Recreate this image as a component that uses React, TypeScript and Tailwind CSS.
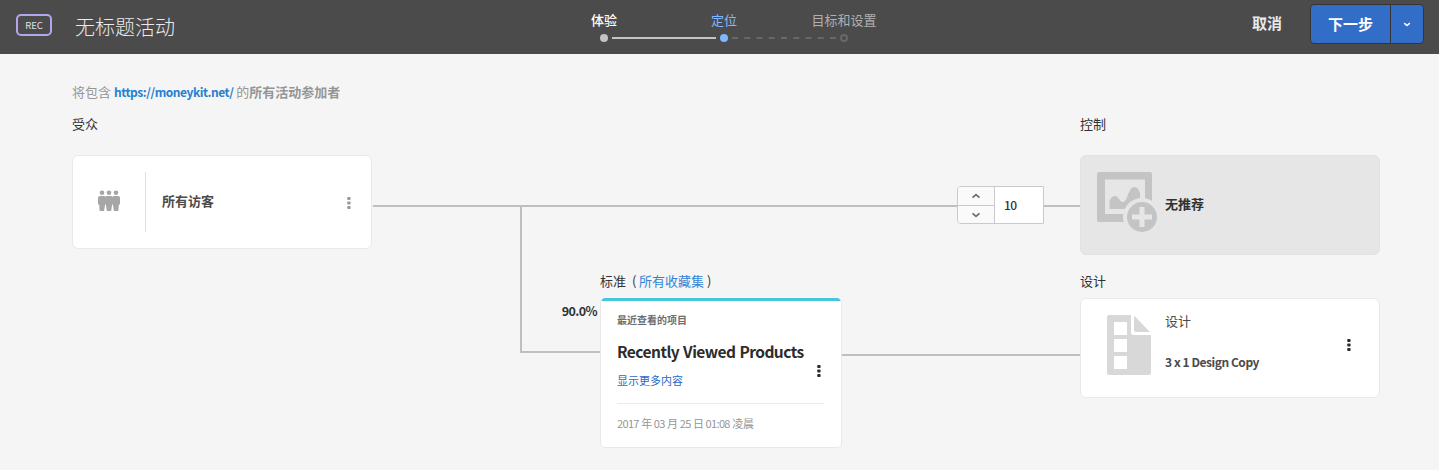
import React from "react";

function Dots({ className = "" }: { className?: string }) {
  return (
    <svg width="4" height="12" viewBox="0 0 4 12" fill="currentColor" className={className}>
      <rect x="0.2" y="0" width="3.4" height="3" rx="1" />
      <rect x="0.2" y="4.5" width="3.4" height="3" rx="1" />
      <rect x="0.2" y="9" width="3.4" height="3" rx="1" />
    </svg>
  );
}

function Chevron({ up = false, className = "" }: { up?: boolean; className?: string }) {
  return (
    <svg width="10" height="6" viewBox="0 0 10 6" fill="none" stroke="currentColor" strokeWidth="1.8" className={className}>
      <path d={up ? "M1.5 4.7 5 1.6 8.5 4.7" : "M1.5 1.3 5 4.4 8.5 1.3"} />
    </svg>
  );
}

function PeopleIcon() {
  return (
    <svg width="24" height="22" viewBox="0 0 24 22" fill="#a6a6a6">
      <circle cx="5" cy="2.7" r="2.3" />
      <circle cx="12" cy="2.7" r="2.3" />
      <circle cx="19" cy="2.7" r="2.3" />
      <path d="M2.700 6h4.600L8.500 6.800 9.700 6h4.600L15.500 6.800 16.700 6h4.600Q23 6 23 8v6.500h-1.200L21.400 21h-4.500L15.900 14.500h-.8L14.200 21H9.800L8.900 14.500h-.8L7.100 21H2.600L2.200 14.500H1V8q0-2 1.700-2Z" />
    </svg>
  );
}

function ImageAddIcon() {
  return (
    <svg width="62" height="62" viewBox="0 0 62 62" fill="#c4c4c4">
      <path fillRule="evenodd" d="M2 0h51q2 0 2 2v48H2q-2 0-2-2V2Q0 0 2 0Zm6 7.500v34.500h40V7.500Z" />
      <path d="M12.500 37v-7.500c1-3.500 3-5.500 5.500-5.500 3.500 0 4.500 6 8 6 4.500 0 5.500-15 11-15 3.500 0 5 3 6 6v16Z" />
      <circle cx="45" cy="45" r="19" fill="#e6e6e6" />
      <circle cx="45" cy="45" r="15" />
      <path d="M45 35v20M35 45h20" stroke="#e6e6e6" strokeWidth="5" />
    </svg>
  );
}

function DesignIcon() {
  return (
    <svg width="44" height="60" viewBox="0 0 44 60">
      <path fill="#d8d8d8" d="M2 0h22v18q0 2 2 2h18v38q0 2-2 2H2q-2 0-2-2V2q0-2 2-2Z" />
      <path fill="#d8d8d8" d="M27 .5V15q0 2 2 2h14Z" />
      <path fill="#fff" d="M7 7h13v13H7zM7 24h13v13H7zM7 41h13v13H7z" />
    </svg>
  );
}

function Steps() {
  return (
    <div className="w-[360px] pt-[10px] text-[13px] leading-5">
      <div className="grid grid-cols-3 text-center">
        <span className="font-medium text-white">体验</span>
        <span className="text-[#82b8ff]">定位</span>
        <span className="text-[#b0b0b0]">目标和设置</span>
      </div>
      <div className="flex items-center pt-[4px] pl-14">
        <span className="size-2 rounded-full bg-[#c4c4c4]" />
        <span className="mx-1 h-[2px] w-[104px] bg-[#c4c4c4]" />
        <span className="size-2 rounded-full bg-[#80b7fa]" />
        <svg className="mx-1" width="104" height="2">
          <path d="M0 1h104" stroke="#686868" strokeWidth="2" strokeDasharray="6 6.250" />
        </svg>
        <span className="size-2 rounded-full border-2 border-[#686868]" />
      </div>
    </div>
  );
}

function Header() {
  return (
    <header className="flex h-[54px] bg-[#4b4b4b] text-white">
      <div className="flex w-[544px] items-center pl-4">
        <span className="-mt-1 flex h-[22px] w-9 items-center justify-center rounded-[5px] border-2 border-[#b5a5ec] text-[9.500px] text-[#e0e0e0]">REC</span>
        <h1 className="ml-[23px] text-[20px] font-light text-[#eaeaea]">无标题活动</h1>
      </div>
      <Steps />
      <div className="ml-auto flex items-start pt-1 pr-[15px] text-[15px] font-bold">
        <button className="mr-7 h-[38px] text-[#e8e8e8]">取消</button>
        <div className="flex h-10 w-[114px] overflow-hidden rounded-[4px] border border-[#353535] bg-[#326ec8]">
          <button className="w-[80px] border-r border-[#353535]">下一步</button>
          <button className="flex flex-1 items-center justify-center">
            <Chevron className="h-[5px] w-2" />
          </button>
        </div>
      </div>
    </header>
  );
}

function Stepper() {
  return (
    <div className="flex h-[38px] w-[87px] overflow-hidden rounded-l-[4px] border border-[#cacaca] bg-white text-[#707070]">
      <div className="flex w-[37px] flex-col border-r border-[#cacaca] bg-[#fafafa]">
        <button className="flex h-[19px] items-center justify-center border-b border-[#cacaca]"><Chevron up /></button>
        <button className="flex flex-1 items-center justify-center"><Chevron /></button>
      </div>
      <span className="pl-[9px] text-[12px] leading-[36px] font-medium tracking-[-0.7px] text-[#323232]">10</span>
    </div>
  );
}

function CriteriaCard() {
  return (
    <article className="h-[150px] w-[242px] overflow-hidden rounded-[5px] border border-t-0 border-[#e8e8e8] bg-white">
      <div className="h-[3px] bg-[#46c6dc]" />
      <div className="flex pl-4 pr-[17px]">
        <div className="min-w-0 flex-1">
          <p className="mt-[9px] text-[10px] leading-5 font-bold text-[#6e6e6e]">最近查看的项目</p>
          <h2 className="mt-[9px] text-[15.500px] leading-6 font-bold tracking-[-0.53px] [word-spacing:1px] whitespace-nowrap text-[#2c2c2c]">Recently Viewed Products</h2>
          <a className="mt-[7px] block text-[11px] leading-5 text-[#2a6ac8]">显示更多内容</a>
        </div>
        <Dots className="mt-[64px] mr-[3px] text-[#2c2c2c]" />
      </div>
      <p className="mr-[17px] ml-4 mt-[13px] border-t border-[#eaeaea] pt-[9px] text-[11px] leading-5 tracking-[-0.65px] [word-spacing:0.5px] text-[#959595]">
        2017 年 03 月 25 日 01:08 <span className="tracking-normal">凌晨</span>
      </p>
    </article>
  );
}

export default function App() {
  return (
    <div className="h-[470px] w-[1439px] overflow-hidden bg-[#f5f5f5] font-['Noto_Sans_CJK_SC',sans-serif] text-[13px] leading-5 text-[#323232]">
      <Header />
      <main className="pt-7 pl-[72px]">
        <p className="text-[#959595]">
          将包含 <a className="text-[12px] font-bold tracking-[-0.45px] text-[#2680d0]">https://moneykit.net/</a> 的<b>所有活动参加者</b>
        </p>
        <div className="mt-3 flex">
          <section className="w-[300px]">
            <h3>受众</h3>
            <div className="mt-[21px] flex h-[94px] items-center rounded-[6px] border border-[#e9e9e9] bg-white pr-5 pl-6">
              <div className="-mt-px flex h-[60px] w-[49px] items-center border-r border-[#e1e1e1] pb-[2px]"><PeopleIcon /></div>
              <span className="-mt-[2px] ml-4 font-bold text-[#4b4b4b]">所有访客</span>
              <Dots className="mt-[2px] ml-auto text-[#999999]" />
            </div>
          </section>

          <section className="flex w-[708px] flex-col pt-[72px]">
            <div className="flex items-center pl-px">
              <span className="mt-[2px] h-[2px] flex-1 bg-[#bfbfbf]" />
              <Stepper />
              <span className="mt-[2px] h-[2px] w-9 bg-[#bfbfbf]" />
            </div>
            <div className="-mt-[17px] flex pl-[148px]">
              <div className="h-[146px] w-20 border-b-2 border-l-2 border-[#bfbfbf] pt-[94px] pr-[3px] text-right text-[12.500px] font-bold tracking-[-0.6px]">90.0%</div>
              <div className="w-[242px] pt-16">
                <h3 className="mb-[7px] flex whitespace-nowrap">
                  标准<span className="w-[13px] pl-[6px]">(</span><a className="text-[#3284d6]">所有收藏集</a><span className="pl-[3px]">)</span>
                </h3>
                <CriteriaCard />
              </div>
              <span className="mt-[147px] h-[2px] flex-1 bg-[#bfbfbf]" />
            </div>
          </section>

          <section className="w-[300px]">
            <h3>控制</h3>
            <div className="mt-[21px] flex h-[100px] rounded-[6px] border border-[#e2e2e2] bg-[#e6e6e6] pt-4 pl-4">
              <ImageAddIcon />
              <strong className="mt-[22px] ml-[6px]">无推荐</strong>
            </div>
            <h3 className="mt-[16px]">设计</h3>
            <div className="mt-[7px] flex h-[100px] rounded-[6px] border border-[#e9e9e9] bg-white pt-4 pr-7 pl-[26px]">
              <DesignIcon />
              <div className="ml-[14px] text-[#4b4b4b]">
                <p className="-mt-1">设计</p>
                <p className="mt-[21px] text-[12px] font-bold tracking-[-0.45px]">3 x 1 Design Copy</p>
              </div>
              <Dots className="mt-6 ml-auto text-[#2c2c2c]" />
            </div>
          </section>
        </div>
      </main>
    </div>
  );
}
